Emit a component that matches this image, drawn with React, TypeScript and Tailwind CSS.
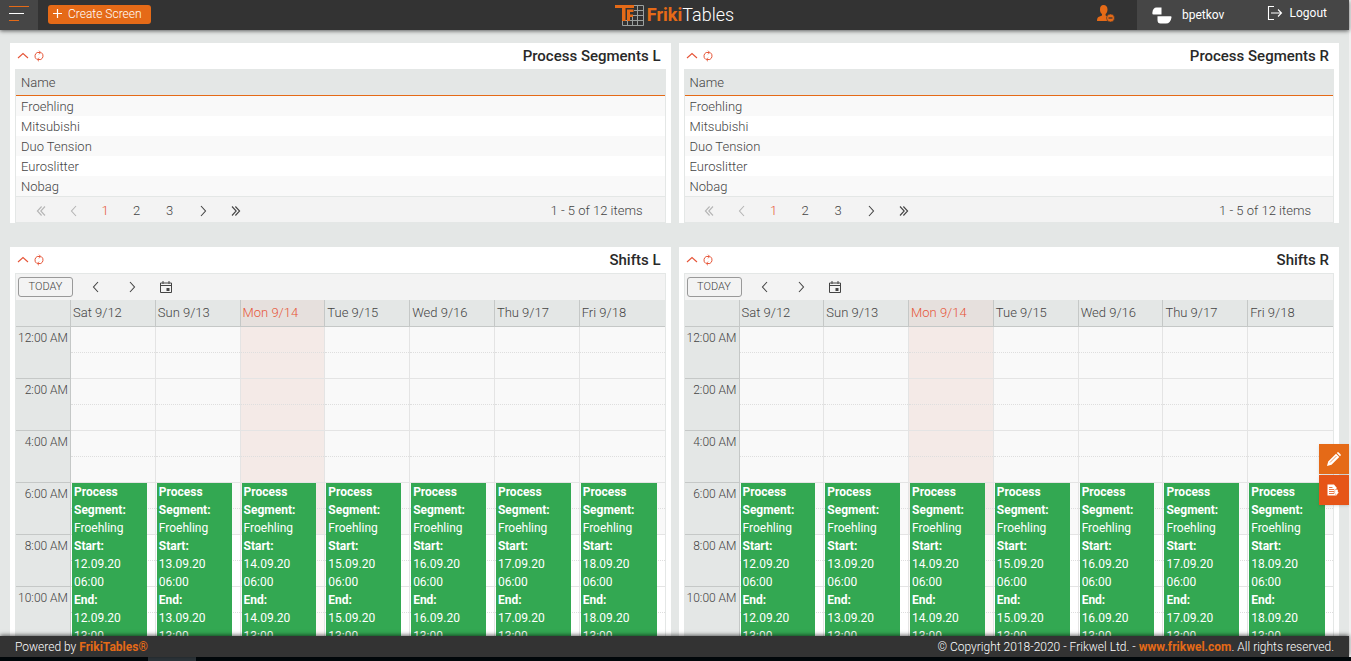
import type { ReactNode } from 'react';

const segments = ['Froehling', 'Mitsubishi', 'Duo Tension', 'Euroslitter', 'Nobag'];

const days = [
  { label: 'Sat 9/12', date: '12.09.20' },
  { label: 'Sun 9/13', date: '13.09.20' },
  { label: 'Mon 9/14', date: '14.09.20', today: true },
  { label: 'Tue 9/15', date: '15.09.20' },
  { label: 'Wed 9/16', date: '16.09.20' },
  { label: 'Thu 9/17', date: '17.09.20' },
  { label: 'Fri 9/18', date: '18.09.20' },
];

const hours = [
  { label: '12:00 AM' },
  { label: '2:00 AM' },
  { label: '4:00 AM' },
  { label: '6:00 AM', shift: true },
  { label: '8:00 AM', work: true },
  { label: '10:00 AM', work: true },
  { label: '12:00 PM', work: true },
];

// Icons

type ChevronProps = {
  dir: 'left' | 'right' | 'up';
  double?: boolean;
};

function Chevron({ dir, double = false }: ChevronProps) {
  const rotation = { left: 'rotate-180', right: '', up: '-rotate-90' }[dir];
  return (
    <svg
      viewBox="0 0 12 12"
      className={`size-3 ${rotation}`}
      fill="none"
      stroke="currentColor"
      strokeWidth="1.1"
      aria-hidden="true"
    >
      {double ? <path d="M2 1.5 6.2 6 2 10.5M5.4 1.5 9.6 6 5.4 10.5" /> : <path d="M4 1 8.5 6 4 11" />}
    </svg>
  );
}

function RefreshIcon() {
  return (
    <svg viewBox="0 0 12 12" className="size-3" fill="none" stroke="currentColor" aria-hidden="true">
      <path d="M3.6 9.3A4 4 0 0 1 4.200 2.500H7.500M8.400 2.700A4 4 0 0 1 7.800 9.500H4.500" />
      <path d="M6 .7 7.800 2.500 6 4.300M6 7.700 4.200 9.500 6 11.300" strokeWidth=".9" />
    </svg>
  );
}

function CalendarIcon() {
  return (
    <svg viewBox="0 0 12 12" className="size-3" fill="none" stroke="currentColor" aria-hidden="true">
      <path d="M.5 2h11v9.5H.5zM.5 4.5h11M3 0v3M9 0v3" />
      <path d="M6.5 7h3v3h-3z" fill="currentColor" stroke="none" />
    </svg>
  );
}

function LogoMark() {
  return (
    <svg viewBox="0 0 30 22" className="mr-[2px] h-[22px] w-[30px]" fill="none" aria-hidden="true">
      <path
        d="M7.500 21.500V16M12.500 21.500V12M17.500 21.500V12M22.500 1.500V21.500M28.500 1.500V21.500M19 1.500H28.500M19 6.500H28.500M12 11.500H28.500M7.500 16.500H28.500M7.500 21.500H28.500"
        stroke="#9ba09e"
      />
      <path d="M0 1H19V4H10.500V17H7V4H0z" fill="#e56a17" />
      <path d="M12 5.500H18.500V8H15V10.500H18V13H15V17H12z" fill="#e56a17" />
    </svg>
  );
}

function UserMinusIcon() {
  return (
    <svg viewBox="0 0 18 18" className="size-[18px]" aria-hidden="true">
      <path
        d="M6.500 0C9 0 10.500 1.700 10.500 4.500C10.500 6.600 9.700 8.200 8.600 9V10.500L12 12V16H0C0 13.500 .5 12.300 2 11.700L5 10.500V9C3.700 8.200 3 6.600 3 4.500C3 1.700 4.200 0 6.500 0Z"
        fill="#e56a17"
      />
      <circle cx="13.500" cy="13" r="4" fill="#e56a17" stroke="#333" strokeWidth=".6" />
      <path d="M11.500 13H15.500" stroke="#333" strokeWidth="1.200" />
    </svg>
  );
}

function AvatarIcon() {
  return (
    <svg viewBox="0 0 20 17" className="h-[17px] w-5" fill="#fff" aria-hidden="true">
      <path d="M4.500 .5H9.500V7.500H1.500Q.2 7.500 .3 6Q.8 .5 4.500 .5Z" />
      <path d="M5.500 9.200H18.500Q19.800 9.200 19.500 10.500Q18.500 16.500 14 16.500H8.500Q5.500 16.500 5.500 13Z" />
    </svg>
  );
}

function LogoutIcon() {
  return (
    <svg viewBox="0 0 16 14" className="h-[14px] w-4" fill="none" stroke="#fff" aria-hidden="true">
      <path d="M7 .5H1.500V13.500H7M4 7H14.500M11 3.500 14.500 7 11 10.500" strokeWidth="1.100" />
    </svg>
  );
}

function PencilIcon() {
  return (
    <svg viewBox="0 0 14 14" className="size-[14px]" fill="#fff" aria-hidden="true">
      <path d="M0 14 1.200 9.500 9 1.700 12.300 5 4.500 12.800ZM9.800 1 10.500.3Q11 0 11.500.3L13.700 2.500Q14 3 13.700 3.500L13 4.200Z" />
      <path d="M3 10.500 9.500 4" stroke="#e56a17" strokeWidth=".7" />
    </svg>
  );
}

function ReportIcon() {
  return (
    <svg viewBox="0 0 12 12" className="mr-[2px] size-3" aria-hidden="true">
      <path d="M.5 .5H7L9.500 3.500V11.500H.5Z" fill="#fff" />
      <path d="M2 3.500H5.500M2 5.500H7M2 7.500H7M2 9.500H7" stroke="#e65518" strokeWidth=".8" />
      <path d="M7.800 5.500H11V8H12.200L9.400 11.500 6.800 8H7.800Z" fill="#fff" stroke="#e65518" strokeWidth=".4" />
    </svg>
  );
}

// Panels

function Panel({ title, children }: { title: string; children: ReactNode }) {
  return (
    <section className="min-w-0 bg-white px-[5px]">
      <div className="flex h-[26px] items-center px-[2px] text-[#e65538]">
        <button type="button" aria-label={`Collapse ${title}`} className="mr-1">
          <Chevron dir="up" />
        </button>
        <button type="button" aria-label={`Refresh ${title}`}>
          <RefreshIcon />
        </button>
        <h2 className="ml-auto pr-[3px] text-[15px] font-medium text-[#292929]">{title}</h2>
      </div>
      {children}
    </section>
  );
}

function SegmentsGrid() {
  return (
    <div className="border-x border-b border-[#e4e7e6]">
      <table className="w-full border-separate border-spacing-0 text-left text-[13px] leading-[18px]">
        <thead>
          <tr className="h-[27px] bg-[#e4e7e6]">
            <th scope="col" className="border-b border-[#e56a17] px-[5px] pt-[2px] pb-0 font-light">Name</th>
          </tr>
        </thead>
        <tbody>
          {segments.map((name) => (
            <tr key={name} className="h-5 odd:bg-[#f9f9f9]">
              <td className="px-[5px] pt-[2px] pb-0">{name}</td>
            </tr>
          ))}
        </tbody>
      </table>
      <div className="flex h-[26px] items-center border-t border-[#e4e7e6] bg-[#f3f3f3] pt-[2px] pr-[22px] pl-2 text-[13px] leading-[18px]">
        <button type="button" disabled aria-label="First page" className="flex w-[33px] justify-center text-[#b5b5b5]">
          <Chevron dir="left" double />
        </button>
        <button type="button" disabled aria-label="Previous page" className="flex w-[33px] justify-center text-[#b5b5b5]">
          <Chevron dir="left" />
        </button>
        <button type="button" className="w-[30px] text-[#e65538]">1</button>
        <button type="button" className="w-[33px]">2</button>
        <button type="button" className="w-[33px]">3</button>
        <button type="button" aria-label="Next page" className="flex w-[33px] justify-center">
          <Chevron dir="right" />
        </button>
        <button type="button" aria-label="Last page" className="flex w-[33px] justify-center">
          <Chevron dir="right" double />
        </button>
        <span className="ml-auto">1 - 5 of 12 items</span>
      </div>
    </div>
  );
}

function Shift({ date }: { date: string }) {
  return (
    <div className="absolute top-0 right-2 left-px z-10 h-[182px] overflow-hidden bg-[#33a852] px-[2px] text-xs leading-[18px] font-normal text-white">
      <b>Process Segment:</b>
      <div>Froehling</div>
      <b>Start:</b>
      <div>{date} 06:00</div>
      <b>End:</b>
      <div>{date} 13:00</div>
    </div>
  );
}

function ShiftsScheduler() {
  return (
    <div className="border border-b-0 border-[#e4e7e6]">
      <div className="flex h-[26px] items-center bg-[#f3f3f3] pl-[2px]">
        <button type="button" className="h-5 w-[55px] rounded-[3px] border border-[#999] text-[11px] leading-[18px]">
          TODAY
        </button>
        <button type="button" aria-label="Previous week" className="ml-[5px] flex w-9 justify-center">
          <Chevron dir="left" />
        </button>
        <button type="button" aria-label="Next week" className="flex w-9 justify-center">
          <Chevron dir="right" />
        </button>
        <button type="button" aria-label="Pick a date" className="flex w-8 justify-center">
          <CalendarIcon />
        </button>
      </div>
      <table className="w-full table-fixed border-separate border-spacing-0 text-left">
        <thead>
          <tr className="h-[27px] bg-[#e4e7e6] text-[13px]">
            <td className="w-[55px] border-r border-b border-[#c5c8c7] p-0" />
            {days.map((day) => (
              <th
                key={day.label}
                scope="col"
                className={`border-r border-b border-[#c5c8c7] py-0 pr-0 pl-[2px] font-light last:border-r-0 ${day.today ? 'bg-[#e6e0dd] text-[#e65538]' : ''}`}
              >
                {day.label}
              </th>
            ))}
          </tr>
        </thead>
        <tbody>
          {hours.map((hour) => (
            <tr key={hour.label} className="h-[52px]">
              <th
                scope="row"
                className="border-r border-b border-[#c5c8c7] bg-[#e4e7e6] pt-[2px] pr-[2px] pb-0 pl-0 text-right align-top text-xs leading-[18px] font-light"
              >
                {hour.label}
              </th>
              {days.map((day) => (
                <td
                  key={day.label}
                  className={`relative border-r border-b border-[#e4e4e4] p-0 align-top last:border-r-0 ${
                    day.today ? (hour.work ? 'bg-[#fdf9f7]' : 'bg-[#f4eae7]') : hour.work ? 'bg-white' : 'bg-[#f9f9f9]'
                  }`}
                >
                  <div className="h-[26px] border-b border-dotted border-[#dedede]" />
                  {hour.shift && <Shift date={day.date} />}
                </td>
              ))}
            </tr>
          ))}
        </tbody>
      </table>
    </div>
  );
}

// Page

function Header() {
  return (
    <header className="relative z-20 grid h-[30px] shrink-0 grid-cols-[1fr_auto_1fr] bg-[#333] text-xs text-white shadow-[0_1px_4px_rgba(0,0,0,0.6)]">
      <div className="flex">
        <button type="button" aria-label="Menu" className="flex w-[38px] flex-col gap-[6px] bg-[#464646] pt-[6px] pl-[9px]">
          <span className="h-px w-5 bg-[#e56a17]" />
          <span className="h-px w-[15px] bg-white" />
          <span className="h-px w-[10px] bg-[#e56a17]" />
        </button>
        <button type="button" className="mt-[5px] ml-[10px] flex h-[19px] w-[103px] items-center gap-[6px] rounded-[3px] bg-[#e56a17] pb-[2px] pl-[5px] leading-4 font-light">
          <svg viewBox="0 0 9 9" className="size-[9px]" stroke="#fff" strokeWidth="1.2" aria-hidden="true">
            <path d="M4.500 0V9M0 4.500H9" />
          </svg>
          Create Screen
        </button>
      </div>
      <a href="#home" className="flex items-center text-lg">
        <LogoMark />
        <span className="font-bold text-[#e56a17]">Friki</span>
        <span className="font-light">Tables</span>
      </a>
      <div className="flex justify-end">
        <button type="button" aria-label="Remove user" className="flex w-[62px] items-center justify-center pb-[2px]">
          <UserMinusIcon />
        </button>
        <div className="flex w-[212px] items-center bg-[#464646] pl-[15px]">
          <a href="#profile" className="flex items-center gap-[10px]">
            <AvatarIcon />
            bpetkov
          </a>
          <a href="#logout" className="ml-auto flex items-center gap-[7px] pr-[22px] pb-1">
            <LogoutIcon />
            Logout
          </a>
        </div>
      </div>
    </header>
  );
}

function Footer() {
  return (
    <footer className="relative z-20 flex h-[21px] shrink-0 items-center justify-between bg-[#333] px-[15px] text-xs font-light text-white shadow-[0_-1px_4px_rgba(0,0,0,0.6)]">
      <span>
        Powered by <a href="#about" className="font-bold text-[#e56a17]">FrikiTables®</a>
      </span>
      <span>
        © Copyright 2018-2020 - Frikwel Ltd. - <a href="#frikwel" className="font-bold text-[#e56a17]">www.frikwel.com</a>. All rights reserved.
      </span>
    </footer>
  );
}

export default function App() {
  return (
    <div className="flex h-screen flex-col bg-[#f1f1f1] font-['Roboto',sans-serif] text-[#444]">
      <div className="relative mr-[2px] flex min-h-0 flex-1 flex-col bg-[#e4e7e6]">
        <Header />
        <main className="min-h-0 flex-1 overflow-hidden px-[10px] pt-[13px] font-light">
          <div className="grid grid-cols-2 gap-x-2 gap-y-6">
            <Panel title="Process Segments L">
              <SegmentsGrid />
            </Panel>
            <Panel title="Process Segments R">
              <SegmentsGrid />
            </Panel>
            <Panel title="Shifts L">
              <ShiftsScheduler />
            </Panel>
            <Panel title="Shifts R">
              <ShiftsScheduler />
            </Panel>
          </div>
        </main>
        <div className="absolute right-0 bottom-[152px] z-30 flex flex-col gap-px">
          <button type="button" aria-label="Edit" className="flex size-[30px] items-center justify-center bg-[#e56a17] shadow-sm">
            <PencilIcon />
          </button>
          <button type="button" aria-label="Report" className="flex size-[30px] items-center justify-center bg-[#e65518] shadow-sm">
            <ReportIcon />
          </button>
        </div>
        <Footer />
      </div>
      <div className="h-1 shrink-0 bg-[#02080b] pl-[148px]">
        <div className="h-full w-12 bg-[#2c3439]" />
      </div>
    </div>
  );
}
